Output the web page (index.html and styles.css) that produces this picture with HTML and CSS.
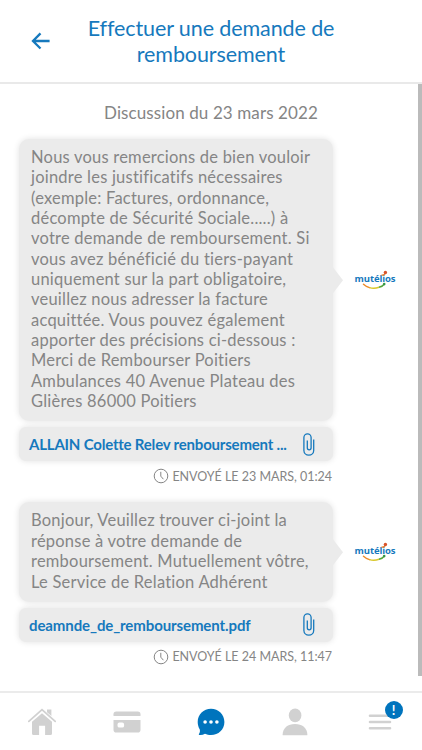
FILE: index.html
```
<!DOCTYPE html>
<html lang="fr">
<head>
    <meta charset="UTF-8">
    <meta name="viewport" content="width=device-width, initial-scale=1.0">
    <title>Effectuer une demande de remboursement</title>
    <link rel="stylesheet" href="styles.css">
</head>
<body>

<svg class="sprite" width="0" height="0">
    <symbol id="clip" viewBox="0 0 12 23">
        <path d="M4.3 7.5v7.2a1.9 2.1 0 0 0 3.8 0V4.6a3.6 3.8 0 0 0-7.200 0v13a4.900 4.600 0 0 0 9.800 0V6.500" fill="none" stroke="#1679bd" stroke-width="1.3"/>
    </symbol>
    <symbol id="clock" viewBox="0 0 16 16">
        <circle cx="8" cy="8" r="6.8" fill="none" stroke="#858585"/>
        <path d="M7.8 3.8v4.4l2.6 3" fill="none" stroke="#858585"/>
    </symbol>
    <symbol id="smile" viewBox="0 0 44 20">
        <path d="M10.500 14.200Q13 16.500 16.500 17.600" fill="none" stroke="#ee8a25" stroke-width="1.5" stroke-linecap="round"/>
        <path d="M16.500 17.600Q21 19 26 17.300" fill="none" stroke="#d9c72a" stroke-width="1.5"/>
        <path d="M26 17.300Q30 16.200 31.500 13.800" fill="none" stroke="#54a63a" stroke-width="1.5"/>
        <circle cx="31.2" cy="14.1" r="1.3" fill="#35964a"/>
        <path d="M28.4 5.1Q31.7 5.5 32.6 2.5" fill="none" stroke="#e87c2a" stroke-width="1.2"/>
        <circle cx="32.4" cy="2.5" r="1.7" fill="#d9542b"/>
    </symbol>
</svg>

<div class="app">
    <header class="header">
        <a class="back" href="#">
            <svg width="20" height="18" viewBox="0 0 20 18">
                <path d="M18.6 9H2.2M9.5 1.4L2 9l7.5 7.5" fill="none" stroke="#1679bd" stroke-width="2.3"/>
            </svg>
        </a>
        <h1>Effectuer une demande de<br>remboursement</h1>
    </header>

    <main class="discussion">
        <h2>Discussion du 23 mars 2022</h2>

        <section class="message">
            <div class="row">
                <div class="bubble">
                    Nous vous remercions de bien vouloir<br>
                    joindre les justificatifs nécessaires<br>
                    (exemple: Factures, ordonnance,<br>
                    décompte de Sécurité Sociale.....) à<br>
                    votre demande de remboursement. Si<br>
                    vous avez bénéficié du tiers-payant<br>
                    uniquement sur la part obligatoire,<br>
                    veuillez nous adresser la facture<br>
                    acquittée. Vous pouvez également<br>
                    apporter des précisions ci-dessous :<br>
                    Merci de Rembourser Poitiers<br>
                    Ambulances 40 Avenue Plateau des<br>
                    Glières 86000 Poitiers
                </div>
                <div class="logo">
                    <span>mutélios</span>
                    <svg width="44" height="20"><use href="#smile"/></svg>
                </div>
            </div>
            <a class="file file-long" href="#">
                <span>ALLAIN Colette Relev renboursement ...</span>
                <svg width="12" height="23"><use href="#clip"/></svg>
            </a>
            <p class="sent"><svg width="16" height="16"><use href="#clock"/></svg><span>ENVOYÉ LE 23 MARS, 01:24</span></p>
        </section>

        <section class="message">
            <div class="row">
                <div class="bubble">
                    Bonjour, Veuillez trouver ci-joint la<br>
                    réponse à votre demande de<br>
                    remboursement. Mutuellement vôtre,<br>
                    Le Service de Relation Adhérent
                </div>
                <div class="logo">
                    <span>mutélios</span>
                    <svg width="44" height="20"><use href="#smile"/></svg>
                </div>
            </div>
            <a class="file" href="#">
                <span>deamnde_de_remboursement.pdf</span>
                <svg width="12" height="23"><use href="#clip"/></svg>
            </a>
            <p class="sent"><svg width="16" height="16"><use href="#clock"/></svg><span>ENVOYÉ LE 24 MARS, 11:47</span></p>
        </section>

        <div class="scrollbar"></div>
    </main>

    <nav class="tabs">
        <a href="#">
            <svg width="28" height="28" viewBox="0 0 28 28" fill="#d1d1d1">
                <path d="M14 5.2l10 8.6v11.700q0 1.500-1.500 1.500h-5.400v-9.300h-6v9.300H5.500Q4 27 4 25.500V13.800z"/>
                <path d="M.8 13.400L14 1.600l13.200 11.800" fill="none" stroke="#d1d1d1" stroke-width="1.8" stroke-linecap="round"/>
                <path d="M19 1.600h4.400V8L19 4.200z"/>
            </svg>
        </a>
        <a href="#">
            <svg width="28" height="22" viewBox="0 0 28 22" fill="#d1d1d1">
                <path d="M.5 5V3.300Q.5.5 3.300.5h21.400q2.800 0 2.800 2.800V5z"/>
                <path fill-rule="evenodd" d="M.5 9h27v9.700q0 2.800-2.800 2.800H3.300q-2.800 0-2.800-2.800zM6.400 11.600q-1.900 0-1.900 1.900v1.200q0 1.900 1.900 1.900h2.800q1.900 0 1.900-1.900v-1.200q0-1.900-1.900-1.900z"/>
            </svg>
        </a>
        <a href="#">
            <svg width="28" height="28" viewBox="0 0 28 28">
                <path d="M14 .8C21.500.8 27.400 6.600 27.400 14S21.500 27.100 14 27.100c-2.200 0-4.200-.5-6-1.400-1.700 1-3.700 1.500-5.700 1.200-.6-.1-.6-.8-.2-1.200.8-1 1.100-2.800.6-4.400C1.400 19.200.7 16.700.7 14 .7 6.600 6.600.8 14 .8z" fill="#0074bd"/>
                <g fill="#fff"><circle cx="8.1" cy="14" r="1.8"/><circle cx="14" cy="14" r="1.8"/><circle cx="19.9" cy="14" r="1.8"/></g>
            </svg>
        </a>
        <a href="#">
            <svg width="26" height="28" viewBox="0 0 26 28" fill="#d1d1d1">
                <ellipse cx="13.1" cy="7.4" rx="6.3" ry="6.8"/>
                <path d="M.6 26.800C.6 20 6 16 13 16s12.400 4 12.400 10.800q0 .5-.5.5H1.100q-.5 0-.5-.5z"/>
            </svg>
        </a>
        <a class="menu" href="#">
            <svg width="24" height="18" viewBox="0 0 24 18">
                <path d="M2 2.700h20M2 9h20M2 15.300h20" stroke="#d1d1d1" stroke-width="2.600" stroke-linecap="round"/>
            </svg>
            <span class="badge">!</span>
        </a>
    </nav>
</div>

</body>
</html>
```
FILE: styles.css
```
* {
    box-sizing: border-box;
}

body {
    margin: 0;
    font-family: 'Lato', 'Liberation Sans', sans-serif;
    background-color: #fff;
    color: #858585;
}

a {
    text-decoration: none;
    color: #1679bd;
}

svg {
    display: block;
    flex-shrink: 0;
}

.sprite {
    position: absolute;
}

.app {
    height: 750px;
    display: flex;
    flex-direction: column;
    overflow: hidden;
}

.header {
    height: 84px;
    border-bottom: 2px solid #e9e9e9;
    display: flex;
    align-items: center;
    padding-left: 31px;
}

.header h1 {
    width: 320px;
    margin: 0;
    text-align: center;
    font-size: 21.5px;
    font-weight: 400;
    line-height: 26px;
    letter-spacing: -0.1px;
    color: #1679bd;
}

.discussion {
    position: relative;
    height: 607px;
    padding-left: 19px;
}

.discussion h2 {
    width: 384px;
    margin: 0;
    padding-top: 19px;
    height: 55px;
    text-align: center;
    font-size: 17px;
    font-weight: 400;
    line-height: 20px;
    letter-spacing: 0.1px;
}

.message {
    margin-bottom: 18px;
}

.row {
    display: flex;
    align-items: center;
    gap: 20px;
}

.bubble {
    position: relative;
    width: 314px;
    padding: 8px 0 10px 12px;
    border-radius: 10px;
    background-color: #ebebeb;
    box-shadow: 0 0 6px rgba(0, 0, 0, 0.12);
    font-size: 16.5px;
    line-height: 20.35px;
    letter-spacing: 0.22px;
    white-space: nowrap;
}

/* pointe de la bulle */
.bubble::after {
    content: "";
    position: absolute;
    left: 100%;
    top: 50%;
    margin-top: -13px;
    width: 10px;
    height: 26px;
    background-color: #ebebeb;
    clip-path: polygon(0 0, 100% 50%, 0 100%);
}

.logo {
    position: relative;
    width: 44px;
    height: 20px;
    text-align: center;
    font-family: 'Open Sans', sans-serif;
    font-size: 9.5px;
    font-weight: 700;
    line-height: 18px;
    letter-spacing: -0.1px;
    white-space: nowrap;
    color: #1679bd;
}

/* sourire sous le nom */
.logo svg {
    position: absolute;
    left: 0;
    top: 0;
}

.file {
    display: flex;
    align-items: center;
    justify-content: space-between;
    width: 314px;
    height: 34px;
    margin-top: 6px;
    padding: 0 18px 0 10px;
    border-radius: 7px;
    background-color: #ebebeb;
    box-shadow: 0 0 6px rgba(0, 0, 0, 0.12);
    font-size: 15px;
    font-weight: 700;
    letter-spacing: -0.1px;
    white-space: nowrap;
}

.file-long {
    letter-spacing: -0.2px;
}

.sent {
    display: flex;
    align-items: center;
    justify-content: flex-end;
    gap: 3px;
    width: 313px;
    height: 16px;
    margin: 7px 0 0;
    font-size: 12.5px;
    letter-spacing: -0.02px;
    white-space: nowrap;
}

.scrollbar {
    position: absolute;
    top: 0;
    right: 0;
    width: 4px;
    height: 592px;
    background-color: #bbb;
}

.tabs {
    height: 59px;
    border-top: 2px solid #ebebeb;
    display: flex;
}

.tabs a {
    flex: 1;
    display: flex;
    align-items: center;
    justify-content: center;
}

.tabs .menu {
    position: relative;
}

.badge {
    position: absolute;
    left: 47px;
    top: 8px;
    width: 18px;
    height: 18px;
    border-radius: 50%;
    background-color: #0074bd;
    color: #fff;
    font-size: 13px;
    font-weight: 700;
    line-height: 18px;
    text-align: center;
}
```
